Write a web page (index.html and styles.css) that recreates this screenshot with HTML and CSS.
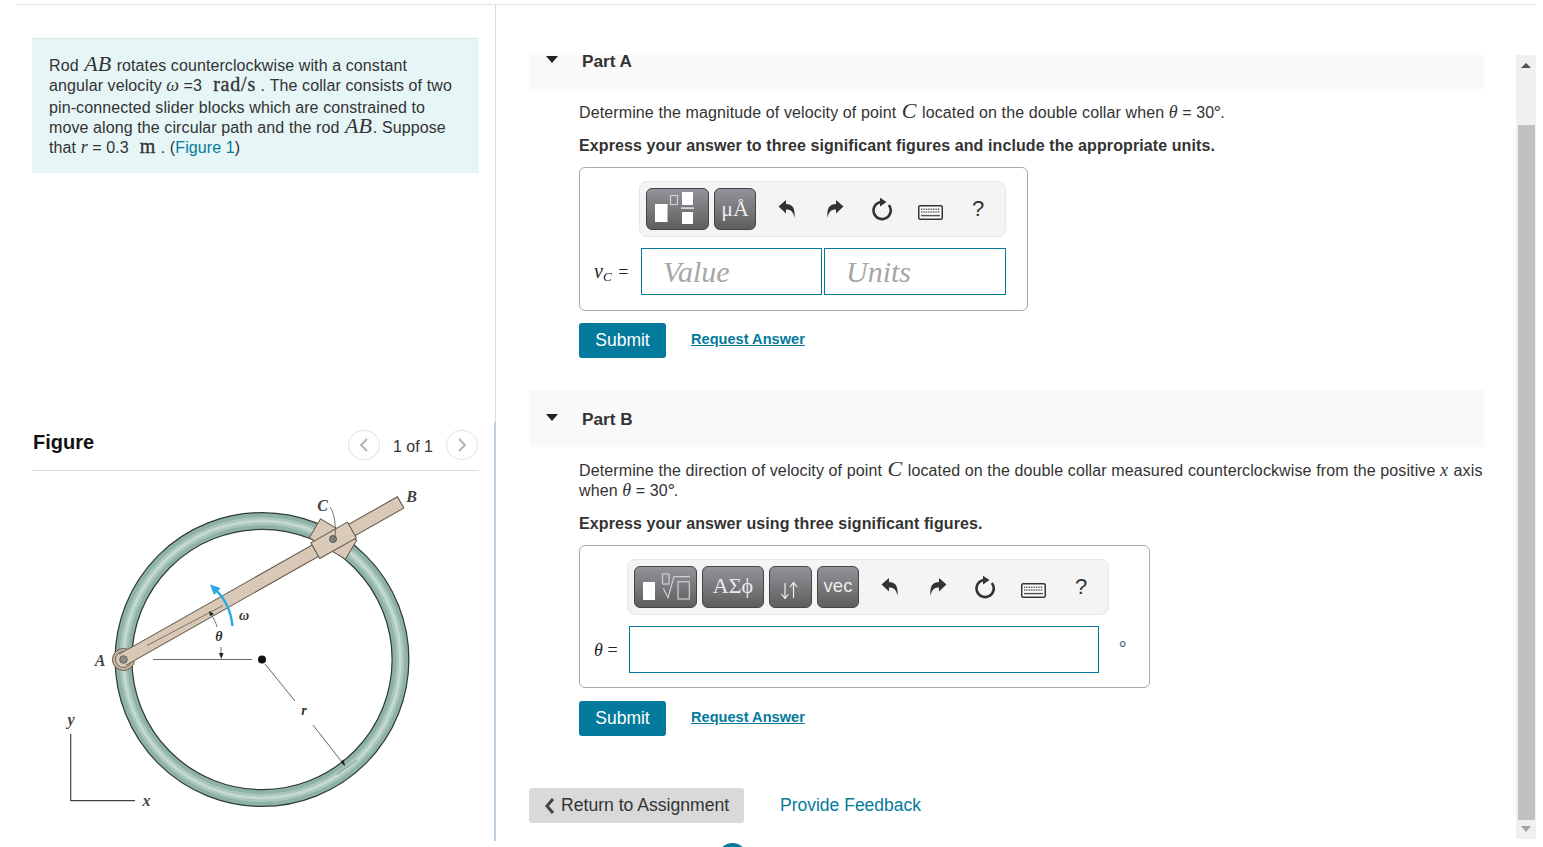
FILE: index.html
```html
<!DOCTYPE html>
<html lang="en">
<head>
<meta charset="utf-8">
<title>Part A and Part B</title>
<link rel="stylesheet" href="styles.css">
</head>
<body>
<svg class="defs" width="0" height="0" aria-hidden="true">
  <defs>
    <symbol id="i-undo" viewBox="0 0 18 20"><path d="M0.5 7.5 L8 1 V5 C14 5 17.5 8.5 16.5 19 C15.5 13 13 10.5 8 10.5 V14.5 Z"/></symbol>
    <symbol id="i-redo" viewBox="0 0 18 20"><path d="M17.5 7.5 L10 1 V5 C4 5 0.5 8.5 1.5 19 C2.5 13 5 10.5 10 10.5 V14.5 Z"/></symbol>
    <symbol id="i-reset" viewBox="0 0 22 24">
      <path class="arc" d="M16.8 8 A8.6 8.6 0 1 1 8.5 5"/>
      <path d="M8 0.8 L14.5 5 L8 9.5 Z"/>
    </symbol>
    <symbol id="i-keys" viewBox="0 0 25 15">
      <rect class="kbd" x="0.75" y="0.75" width="23.5" height="13.5" rx="1.5"/>
      <path class="kbd-dots" d="M3 4.2H22M3 7H22"/>
      <path class="kbd-bar" d="M3 10.6H22"/>
    </symbol>
  </defs>
</svg>

<div class="top-rule"></div>
<main class="layout">
  <aside class="left">
    <p class="intro">Rod <span class="m big">AB</span> rotates counterclockwise with a constant angular velocity <span class="m">ω</span> =3 &nbsp;<span class="u frac">rad/s</span> . The collar consists of two pin-connected slider blocks which are constrained to move along the circular path and the rod <span class="m big">AB</span>. Suppose that <span class="m">r</span> = 0.3 &nbsp;<span class="u">m</span> . (<a class="link" href="#">Figure 1</a>)</p>
    <header class="fig-head">
      <h2 class="fig-title">Figure</h2>
      <div class="pager">
        <button class="pager-btn" type="button" aria-label="Previous"><svg width="10" height="16" viewBox="0 0 10 16"><path d="M8 2 L2 8 L8 14"/></svg></button>
        <span class="pager-text">1 of 1</span>
        <button class="pager-btn" type="button" aria-label="Next"><svg width="10" height="16" viewBox="0 0 10 16"><path d="M2 2 L8 8 L2 14"/></svg></button>
      </div>
    </header>
    <svg class="figure" width="447" height="369" viewBox="32 472 447 369">
      <circle cx="262" cy="660.5" r="138.5" fill="none" stroke="#2f3d39" stroke-width="18"/>
      <circle cx="262" cy="660.5" r="138.5" fill="none" stroke="#8fb2a7" stroke-width="15.5"/>
      <circle cx="262" cy="660.5" r="138.5" fill="none" stroke="#a9c6bc" stroke-width="8"/>
      <circle cx="262" cy="660.5" r="138.5" fill="none" stroke="#c4d9d2" stroke-width="3"/>
      <path d="M337 775.5 L357 761" stroke="#7f918b" stroke-width="1" fill="none"/>
      <g transform="rotate(30.6 333 540)">
        <rect x="312" y="529" width="42" height="22" fill="#d9c9b6" stroke="#5e5549" stroke-width="1"/>
      </g>
      <circle cx="123.5" cy="660.5" r="11" fill="#c7b8a2" stroke="#5e5549" stroke-width="1"/>
      <circle cx="123.5" cy="660.5" r="8" fill="#d8c8b5" stroke="#6d6356" stroke-width="1"/>
      <g transform="rotate(-29.5 123 660.5)">
        <rect x="123" y="654" width="319" height="13" fill="#d8c8b5" stroke="#5e5549" stroke-width="1"/>
        <rect x="122" y="654.5" width="10" height="12" fill="#d8c8b5"/>
        <rect x="344" y="651.5" width="42" height="18" fill="#dacbb9" stroke="#5e5549" stroke-width="1"/>
      </g>
      <circle cx="123.5" cy="660.5" r="3.8" fill="#8b8b88" stroke="#555" stroke-width="0.8"/>
      <circle cx="333" cy="540" r="3.5" fill="#80807e" stroke="#444" stroke-width="0.8"/>
      <path d="M147 646.5 L223 606.5" stroke="#7d7468" stroke-width="1" fill="none"/>
      <path d="M330 508 C335 515 336 528 335 539" stroke="#555" stroke-width="0.8" fill="none"/>
      <path d="M153 660.5 H252" stroke="#666" stroke-width="1" fill="none"/>
      <circle cx="262" cy="660.5" r="4" fill="#111"/>
      <path d="M265 665 L295 702 M313 726 L345 767" stroke="#666" stroke-width="1" fill="none"/>
      <path d="M345 767 L340.5 763 L343.5 760.5 Z" fill="#222"/>
      <path d="M211 615 C214 620 216 624 217 628 M221 648 V655" stroke="#555" stroke-width="0.8" fill="none"/>
      <path d="M209 612 L214 615 L210 617 Z M219 654 H223.5 L221.3 660 Z" fill="#222"/>
      <path d="M232.5 627 C231 612 225 600 216.5 591.5" stroke="#29a9e0" stroke-width="2.4" fill="none"/>
      <path d="M210 585.5 L220.5 589 L214 596 Z" fill="#29a9e0"/>
      <path d="M70.7 735 V801.7 H135" stroke="#444" stroke-width="1.2" fill="none"/>
      <text class="fig-l" x="100" y="667" text-anchor="middle">A</text>
      <text class="fig-l" x="411.5" y="502.5" text-anchor="middle">B</text>
      <text class="fig-l" x="322.5" y="511.5" text-anchor="middle">C</text>
      <text class="fig-s" x="304" y="716" text-anchor="middle">r</text>
      <text class="fig-s" x="219" y="642" text-anchor="middle">θ</text>
      <text class="fig-s" x="244" y="620.5" text-anchor="middle">ω</text>
      <text class="fig-l" x="71" y="725.5" text-anchor="middle">y</text>
      <text class="fig-l" x="146.5" y="806.5" text-anchor="middle">x</text>
    </svg>
  </aside>

  <div class="divider"></div>

  <section class="pane">
    <div class="content">
      <div class="part part-first">
        <div class="part-head"><span class="caret"></span><h3 class="part-title">Part A</h3></div>
        <p class="q">Determine the magnitude of velocity of point <span class="m big">C</span> located on the double collar when <span class="m">θ</span> = 30<sup class="deg">∘</sup>.</p>
        <p class="q strong">Express your answer to three significant figures and include the appropriate units.</p>
        <div class="answer answer-a">
          <div class="toolbar tb-a">
            <button class="tbtn w63" type="button" aria-label="Templates">
              <svg width="63" height="42" viewBox="0 0 63 42">
                <rect class="w" x="9" y="16" width="12.5" height="18"/>
                <rect class="h" x="24.5" y="7.5" width="7" height="9"/>
                <rect class="w" x="36" y="4" width="11" height="13"/>
                <rect class="w" x="35" y="19.5" width="13" height="1.2"/>
                <rect class="w" x="36" y="24" width="11" height="12"/>
              </svg>
            </button>
            <button class="tbtn w42 serif" type="button">μÅ</button>
            <span class="tools">
              <span class="tool"><svg width="18" height="20"><use href="#i-undo"/></svg></span>
              <span class="tool"><svg width="18" height="20"><use href="#i-redo"/></svg></span>
              <span class="tool"><svg width="22" height="24"><use href="#i-reset"/></svg></span>
              <span class="tool tool-low"><svg width="25" height="15"><use href="#i-keys"/></svg></span>
              <span class="tool help">?</span>
            </span>
          </div>
          <div class="row">
            <span class="lab lab-a"><span class="m var-v">v</span><sub class="m sub">C</sub> <span class="eq">=</span></span>
            <div class="field f-value">Value</div>
            <div class="field f-units">Units</div>
          </div>
        </div>
        <div class="actions"><button class="submit" type="button">Submit</button><a class="req" href="#">Request Answer</a></div>
      </div>

      <div class="part part-second">
        <div class="part-head"><span class="caret"></span><h3 class="part-title">Part B</h3></div>
        <p class="q">Determine the direction of velocity of point <span class="m big">C</span> located on the double collar measured counterclockwise from the positive <span class="m var-x">x</span> axis when <span class="m">θ</span> = 30<sup class="deg">∘</sup>.</p>
        <p class="q strong">Express your answer using three significant figures.</p>
        <div class="answer answer-b">
          <div class="toolbar tb-b">
            <button class="tbtn w63" type="button" aria-label="Templates">
              <svg width="63" height="42" viewBox="0 0 63 42">
                <rect class="w" x="9" y="16" width="12" height="18"/>
                <rect class="h" x="28.5" y="8" width="6.5" height="10"/>
                <path class="h" d="M29.3 22.3 L34 31.7 L40 10.7 H56"/>
                <rect class="h" x="44" y="15.7" width="11.3" height="17.3"/>
              </svg>
            </button>
            <button class="tbtn w62 serif raised" type="button">ΑΣϕ</button>
            <button class="tbtn w43" type="button" aria-label="Arrows">
              <svg width="43" height="42" viewBox="0 0 43 42"><path class="arrows" d="M16 17 V32 M12.5 28 L16 32.5 L19.5 28 M24.5 32 V17 M21 21 L24.5 16.5 L28 21"/></svg>
            </button>
            <button class="tbtn w42 sans raised" type="button">vec</button>
            <span class="tools">
              <span class="tool"><svg width="18" height="20"><use href="#i-undo"/></svg></span>
              <span class="tool"><svg width="18" height="20"><use href="#i-redo"/></svg></span>
              <span class="tool"><svg width="22" height="24"><use href="#i-reset"/></svg></span>
              <span class="tool tool-low"><svg width="25" height="15"><use href="#i-keys"/></svg></span>
              <span class="tool help">?</span>
            </span>
          </div>
          <div class="row">
            <span class="lab lab-b"><span class="m">θ</span> <span class="eq">=</span></span>
            <div class="field f-wide"></div>
            <span class="unit-deg">∘</span>
          </div>
        </div>
        <div class="actions"><button class="submit" type="button">Submit</button><a class="req" href="#">Request Answer</a></div>
      </div>

      <div class="footer-row">
        <button class="return" type="button"><svg width="11" height="16" viewBox="0 0 11 16"><path d="M9 1 L3 8 L9 15"/></svg>Return to Assignment</button>
        <a class="feedback" href="#">Provide Feedback</a>
      </div>
    </div>

    <div class="scrollbar">
      <span class="sb-up"></span>
      <span class="sb-thumb"></span>
      <span class="sb-down"></span>
    </div>
  </section>
</main>
<span class="help-bubble"></span>
</body>
</html>
```
FILE: styles.css
```css
* { box-sizing: border-box; }
html, body { margin: 0; padding: 0; height: 847px; overflow: hidden; background: #fff; }
body { font-family: "Liberation Sans", Arial, sans-serif; font-size: 16px; line-height: 20px; color: #333; position: relative; }
.defs { position: absolute; }
p, h2, h3 { margin: 0; }
a { text-decoration: none; }
button { font-family: inherit; cursor: pointer; }

.top-rule { height: 1px; margin: 4px 7px 0 16px; background: #e2e2e2; }
.layout { display: flex; align-items: flex-start; margin-left: 16px; width: 1520px; }

.left { width: 478px; padding: 33px 15px 0 16px; flex: none; }
.intro { height: 135px; padding: 17px 21px 0 17px; background: #e6f5f6; border-top: 1px solid #dbe8ea; letter-spacing: 0.1px; }
.m { font-family: "Liberation Serif", "DejaVu Serif", serif; font-style: italic; font-size: 18px; line-height: 0; letter-spacing: 0; }
.big { font-size: 22px; margin: 0 1px; }
.var-x { margin-right: 1px; }
.u { font-family: "Liberation Serif", "DejaVu Serif", serif; font-size: 20px; line-height: 0; letter-spacing: 0.8px; margin-left: 2px; -webkit-text-stroke: 0.3px #333; }
.frac { display: inline-block; padding-bottom: 6px; line-height: 16px; }
.link { color: #047a9c; }

.fig-head { display: flex; justify-content: space-between; align-items: flex-start; margin-top: 257px; height: 41px; border-bottom: 1px solid #dcdcdc; }
.fig-title { font-size: 20px; line-height: 24px; font-weight: 700; color: #111; margin-left: 1px; }
.pager { display: flex; align-items: center; height: 29px; margin-right: 1px; }
.pager-btn { width: 32px; height: 30px; padding: 0; border: 1px solid #e3e3e3; border-radius: 50%; background: #fff; display: flex; align-items: center; justify-content: center; }
.pager-btn path { fill: none; stroke: #b5b5b5; stroke-width: 2; }
.pager-text { margin: 4px 13px 0; white-space: nowrap; }
.figure { display: block; }
.fig-l { font-family: "Liberation Serif", serif; font-style: italic; font-weight: 700; font-size: 16px; fill: #444; }
.fig-s { font-family: "Liberation Serif", serif; font-style: italic; font-weight: 700; font-size: 14px; fill: #333; }

.divider { flex: none; width: 2px; height: 836px; background: linear-gradient(#dadada, #dadada) right top / 1px 417px no-repeat, linear-gradient(#c3d0df, #c3d0df) left bottom / 2px 419px no-repeat; }

.pane { flex: none; display: flex; width: 1007px; height: 784px; margin: 50px 0 0 33px; overflow: hidden; }
.content { flex: none; width: 955px; height: 784px; overflow: hidden; }
.scrollbar { flex: none; width: 20px; height: 784px; margin-left: 32px; background: #f0f0f0; display: flex; flex-direction: column; align-items: center; }
.sb-up { width: 0; height: 0; margin-top: 8px; border: 5px solid transparent; border-top: 0; border-bottom: 5px solid #505050; }
.sb-thumb { width: 17px; height: 695px; margin: 57px 0 0 1px; background: #c1c1c1; }
.sb-down { width: 0; height: 0; margin-top: 6px; border: 5px solid transparent; border-bottom: 0; border-top: 6px solid #a3a3a3; }

.part-first { margin-top: -23px; }
.part-second { margin-top: 32px; }
.part-head { display: flex; align-items: center; height: 57px; background: #f9f9f9; padding-left: 17px; }
.caret { width: 0; height: 0; border-left: 6.5px solid transparent; border-right: 6.5px solid transparent; border-top: 7px solid #222; margin-top: -2px; }
.part-title { margin-left: 24px; font-size: 17.2px; font-weight: 700; color: #333; }
.q { margin: 14px 0 0 50px; letter-spacing: 0.115px; }
.strong { margin-top: 13px; letter-spacing: 0.1px; font-weight: 700; }
.deg { font-size: 17px; line-height: 0; vertical-align: 5px; margin: 0 -3px 0 -2px; font-family: "Liberation Serif", serif; letter-spacing: 0; }

.answer { margin: 11px 0 0 50px; border: 1px solid #aaa; border-radius: 6px; padding: 13px 0 0 0; }
.answer-a { width: 449px; height: 144px; }
.answer-b { width: 571px; height: 143px; }
.toolbar { display: flex; align-items: center; height: 56px; padding: 0 0 0 6px; background: #f4f4f4; border: 1px solid #e6e6e6; border-radius: 8px; gap: 5px; }
.tb-a { width: 367px; margin-left: 59px; }
.tb-b { width: 482px; margin-left: 47px; }
.tbtn { flex: none; height: 42px; padding: 0; border: 1px solid #444; border-radius: 6px; background: linear-gradient(to bottom, #94929a, #5e5e5e); color: #ececec; display: flex; align-items: center; justify-content: center; }
.tbtn svg { display: block; flex: none; }
.w63 { width: 63px; }
.w62 { width: 62px; }
.w43 { width: 43px; }
.w42 { width: 42px; }
.serif { font-family: "Liberation Serif", serif; font-size: 22px; }
.sans { font-size: 18.5px; }
.raised { padding-bottom: 2px; }
.w { fill: #fff; }
.h { fill: none; stroke: #d0d0d0; stroke-width: 1.2; }
.arrows { fill: none; stroke: #f0f0f0; stroke-width: 1.2; }
.tools { flex: none; display: flex; margin-left: 2px; }
.tool { width: 48px; height: 42px; display: flex; align-items: center; justify-content: center; color: #333; fill: #333; }
.tool-low { padding: 6px 1px 0 0; }
.help { font-size: 22px; padding: 0 2px 0 0; }
.arc { fill: none; stroke: #333; stroke-width: 2.6; }
.kbd { fill: #fff; stroke: #333; stroke-width: 1.5; }
.kbd-dots { stroke: #555; stroke-width: 1.6; stroke-dasharray: 1 0.7; fill: none; }
.kbd-bar { stroke: #555; stroke-width: 1.5; fill: none; }

.row { display: flex; align-items: center; margin-top: 11px; padding-left: 14px; }
.lab { flex: none; padding-top: 2px; font-size: 17px; color: #222; }
.lab-a { width: 47px; }
.lab-b { width: 35px; }
.var-v { font-size: 20px; }
.eq { font-family: "Liberation Serif", serif; font-size: 18px; }
.lab-a .eq { margin-left: 2px; }
.sub { font-size: 13px; line-height: 0; vertical-align: -3px; }
.field { height: 47px; border: 1px solid #047a9c; background: #fff; font-family: "Liberation Serif", serif; font-style: italic; font-size: 30px; line-height: 46px; color: #a6a6a6; padding-left: 21px; }
.f-value { width: 181px; margin-right: 2px; }
.f-units { width: 182px; }
.f-wide { width: 470px; }
.unit-deg { margin: -14px 0 0 18px; font-family: "Liberation Serif", serif; font-size: 18px; line-height: 20px; color: #47606b; }

.actions { display: flex; align-items: center; margin: 12px 0 0 50px; }
.answer-b + .actions { margin-top: 13px; }
.submit { width: 87px; height: 35px; padding: 0; border: 0; border-radius: 3px; background: #047a9c; color: #fff; font-size: 17.5px; }
.req { margin: -3px 0 0 25px; font-size: 14.6px; font-weight: 700; color: #047a9c; text-decoration: underline; }

.footer-row { display: flex; align-items: center; margin-top: 52px; }
.return { display: flex; align-items: center; width: 215px; height: 35px; padding: 0 0 0 15px; border: 0; border-radius: 3px; background: #d9d9d9; color: #333; font-size: 17.6px; white-space: nowrap; }
.return svg { margin-right: 6px; }
.return path { fill: none; stroke: #444; stroke-width: 3; }
.feedback { margin: -2px 0 0 36px; font-size: 17.5px; color: #047a9c; }

.help-bubble { position: absolute; left: 718px; top: 843px; width: 29px; height: 29px; border-radius: 50%; background: #047a9c; }
```
